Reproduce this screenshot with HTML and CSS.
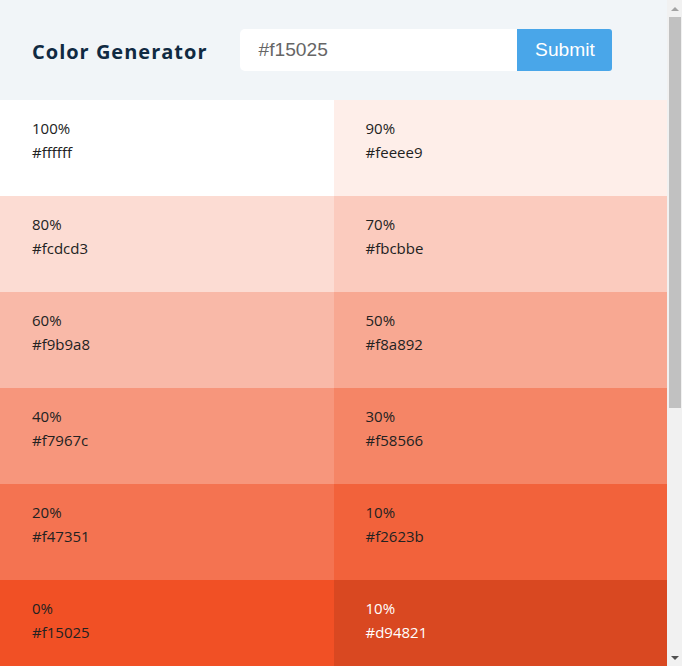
FILE: index.html
```html
<!DOCTYPE html>
<html lang="en">
<head>
<meta charset="utf-8">
<title>Color Generator</title>
<link rel="stylesheet" href="styles.css">
</head>
<body>
<main class="page">
  <section class="container">
    <h3 class="title">Color Generator</h3>
    <form class="form">
      <input class="color-input" type="text" value="#f15025">
      <button class="btn" type="button">Submit</button>
    </form>
  </section>
  <section class="colors">
    <article class="color" style="background:#ffffff"><p class="percent">100%</p><p class="value">#ffffff</p></article>
    <article class="color" style="background:#feeee9"><p class="percent">90%</p><p class="value">#feeee9</p></article>
    <article class="color" style="background:#fcdcd3"><p class="percent">80%</p><p class="value">#fcdcd3</p></article>
    <article class="color" style="background:#fbcbbe"><p class="percent">70%</p><p class="value">#fbcbbe</p></article>
    <article class="color" style="background:#f9b9a8"><p class="percent">60%</p><p class="value">#f9b9a8</p></article>
    <article class="color" style="background:#f8a892"><p class="percent">50%</p><p class="value">#f8a892</p></article>
    <article class="color" style="background:#f7967c"><p class="percent">40%</p><p class="value">#f7967c</p></article>
    <article class="color" style="background:#f58566"><p class="percent">30%</p><p class="value">#f58566</p></article>
    <article class="color" style="background:#f47351"><p class="percent">20%</p><p class="value">#f47351</p></article>
    <article class="color" style="background:#f2623b"><p class="percent">10%</p><p class="value">#f2623b</p></article>
    <article class="color" style="background:#f15025"><p class="percent">0%</p><p class="value">#f15025</p></article>
    <article class="color color-light" style="background:#d94821"><p class="percent">10%</p><p class="value">#d94821</p></article>
  </section>
</main>
<div class="scrollbar" aria-hidden="true">
  <div class="sb-btn"><span class="arrow-up"></span></div>
  <div class="sb-track"><div class="sb-thumb"></div></div>
  <div class="sb-btn"><span class="arrow-down"></span></div>
</div>
</body>
</html>
```
FILE: styles.css
```css
* { box-sizing: border-box; }
html, body { height: 100%; }
body {
  margin: 0;
  display: flex;
  overflow: hidden;
  font-family: "Open Sans", "Noto Sans", sans-serif;
  background: #ffffff;
  color: #222222;
}
.page {
  flex: 1;
  min-width: 0;
  height: 100%;
  overflow: hidden;
}
.scrollbar {
  flex: none;
  width: 15px;
  height: 100%;
  display: flex;
  flex-direction: column;
  background: #f1f1f1;
}
.sb-btn {
  flex: none;
  height: 17px;
  display: flex;
  align-items: center;
  justify-content: center;
}
.arrow-up {
  width: 0;
  height: 0;
  border-style: solid;
  border-width: 0 4px 4px 4px;
  border-color: transparent transparent #a3a3a3 transparent;
}
.arrow-down {
  width: 0;
  height: 0;
  border-style: solid;
  border-width: 4px 4px 0 4px;
  border-color: #505050 transparent transparent transparent;
}
.sb-track {
  flex: 1;
}
.sb-thumb {
  height: 391px;
  margin: 0 1px 0 2px;
  background: #c1c1c1;
}
.container {
  display: flex;
  align-items: center;
  height: 100px;
  padding-left: 32px;
  background: #f1f5f8;
}
.title {
  margin: 3px 33px 0 0;
  font-family: "Open Sans", sans-serif;
  font-size: 20px;
  font-weight: 700;
  letter-spacing: 1px;
  color: #102a42;
}
.form {
  display: flex;
  margin: 0;
}
.color-input {
  width: 277px;
  height: 42px;
  border: none;
  outline: none;
  padding: 0 18px;
  font-family: "Liberation Sans", Arial, sans-serif;
  font-size: 19.2px;
  color: #666666;
  background: #ffffff;
  border-radius: 5px 0 0 5px;
}
.btn {
  width: 95px;
  height: 42px;
  border: none;
  padding: 0;
  background: #49a6e9;
  color: #ffffff;
  font-family: "Liberation Sans", Arial, sans-serif;
  font-size: 19.2px;
  border-radius: 0 3px 3px 0;
}
.colors {
  display: grid;
  grid-template-columns: 1fr 1fr;
  grid-auto-rows: 96px;
}
.color {
  padding: 16px 32px;
  font-size: 15px;
  line-height: 24px;
}
.color p { margin: 0; color: #222222; }
.color-light p { color: #ffffff; }
```
